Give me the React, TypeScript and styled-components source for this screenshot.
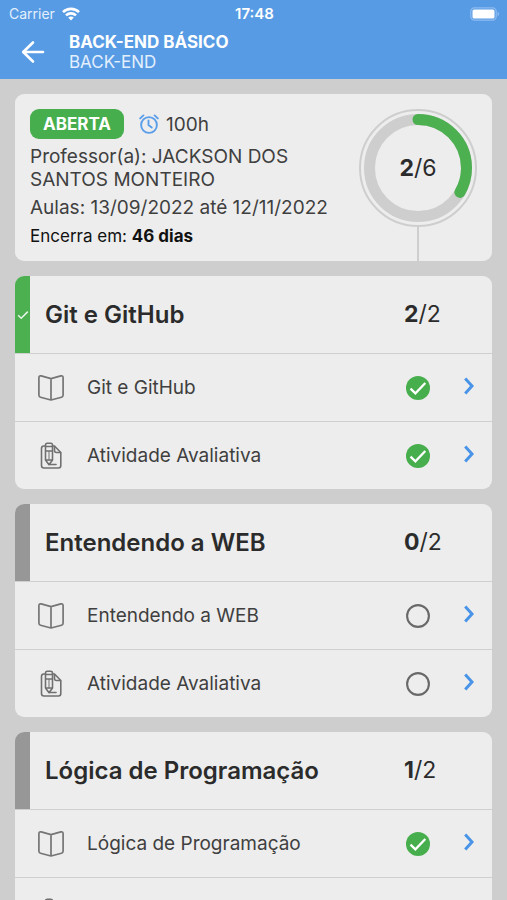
import React from "react";
import styled, { createGlobalStyle } from "styled-components";

const GlobalStyle = createGlobalStyle`
  *, *::before, *::after { box-sizing: border-box; }
  body {
    margin: 0;
    background: #cecece;
    color: #2b2b2b;
    font-family: Inter, "Liberation Sans", sans-serif;
  }
  h1, h2, p, ul { margin: 0; padding: 0; }
  ul { list-style: none; }
`;

const Screen = styled.div`
  height: 100vh;
  display: flex;
  flex-direction: column;
  overflow: hidden;
`;

const TopArea = styled.header`
  flex: none;
  background: #579be4;
  color: #fff;
`;

const StatusBar = styled.div`
  display: grid;
  grid-template-columns: 1fr auto 1fr;
  align-items: center;
  height: 28px;
  padding: 0 7px 0 9px;
  font-size: 14px;
  line-height: 16px;
`;

const Carrier = styled.span`
  display: flex;
  align-items: center;
  gap: 7px;
  color: #e3effc;
`;

const Clock = styled.span`
  font-size: 15px;
  font-weight: 600;
`;

const BatterySlot = styled.span`
  display: flex;
  justify-content: flex-end;
`;

const TitleBar = styled.div`
  display: flex;
  align-items: center;
  gap: 23px;
  height: 51px;
  padding: 0 20px 3px;
`;

const BackButton = styled.button`
  display: flex;
  padding: 0;
  border: 0;
  background: none;
  color: inherit;
  cursor: pointer;
`;

const CourseTitle = styled.h1`
  font-size: 17px;
  line-height: 20px;
  font-weight: 700;
`;

const CourseArea = styled.p`
  font-size: 17px;
  line-height: 20px;
  color: #e3effc;
`;

const Content = styled.main`
  flex: 1;
  min-height: 0;
  display: flex;
  flex-direction: column;
  gap: 15px;
  padding: 15px;
  overflow: hidden;
`;

const Card = styled.section`
  flex: none;
  overflow: hidden;
  border-radius: 9px;
  background: #ededed;
`;

const Summary = styled(Card)`
  display: flex;
  justify-content: space-between;
  padding: 0 15px;
`;

const SummaryText = styled.div`
  flex: 1;
  padding: 15px 0 13px;
  font-size: 19px;
  color: #3f3f3f;
`;

const StatusLine = styled.div`
  display: flex;
  align-items: center;
  gap: 15px;
  margin-bottom: 6px;
`;

const Badge = styled.span`
  padding: 0 13px;
  border-radius: 9px;
  background: #46ae4c;
  color: #fff;
  font-size: 17px;
  line-height: 30px;
  font-weight: 700;
`;

const Workload = styled.span`
  display: flex;
  align-items: center;
  gap: 7px;
`;

const Teacher = styled.p`
  max-width: 290px;
  line-height: 23px;
`;

const Period = styled.p`
  margin-top: 5px;
  line-height: 24px;
  white-space: nowrap;
`;

const Deadline = styled.p`
  margin-top: 4px;
  font-size: 17px;
  line-height: 24px;
  color: #111;
`;

const Gauge = styled.div`
  display: flex;
  flex-direction: column;
  align-items: center;
  padding-top: 15px;
`;

const Dial = styled.div`
  display: grid;
  place-items: center;
  > * { grid-area: 1 / 1; }
`;

const DialValue = styled.span`
  font-size: 23px;
  line-height: 28px;
`;

const Stem = styled.div`
  flex: 1;
  width: 2px;
  background: #cecece;
`;

const ModuleHeader = styled.div`
  display: flex;
  align-items: stretch;
  height: 77px;
`;

const Marker = styled.span<{ $done: boolean }>`
  flex: none;
  display: flex;
  align-items: center;
  justify-content: center;
  width: 15px;
  background: ${(p) => (p.$done ? "#4caf50" : "#979797")};
`;

const ModuleTitle = styled.h2`
  flex: 1;
  align-self: center;
  padding-left: 15px;
  font-size: 24px;
  line-height: 31px;
  font-weight: 600;
`;

const ModuleCount = styled.span`
  flex: none;
  align-self: center;
  width: 88px;
  font-size: 23px;
  line-height: 31px;
`;

const Lesson = styled.button`
  display: flex;
  align-items: center;
  width: 100%;
  height: 68px;
  padding: 0 17px 0 22px;
  border: 0;
  border-top: 1px solid #cfcfcf;
  background: none;
  color: #3f3f3f;
  font: inherit;
  font-size: 19px;
  line-height: 24px;
  text-align: left;
  cursor: pointer;
`;

const LessonName = styled.span`
  flex: 1;
  padding-left: 22px;
`;

const Chevron = styled.span`
  display: flex;
  padding: 0 0 3px 33px;
`;

const WifiIcon = () => (
  <svg width="18" height="14" viewBox="0 0 18 14" fill="none" stroke="#fff" strokeWidth="2.6" aria-hidden="true">
    <path d="M1 5.2C5.400 .7 12.600 .7 17 5.200" />
    <path d="M4 8.400c2.800-2.700 7.200-2.700 10 0" />
    <path d="M6.200 10.500 9 13.600l2.800-3.100c-1.600-1.500-4-1.500-5.600 0z" fill="#fff" stroke="none" />
  </svg>
);

const BatteryIcon = () => (
  <svg width="30" height="14" viewBox="0 0 30 14" aria-hidden="true">
    <rect x=".8" y=".8" width="25.400" height="12.400" rx="3.600" fill="none" stroke="#8fbcf0" strokeWidth="1.200" />
    <rect x="2.500" y="2.500" width="22" height="9" rx="1.600" fill="#fff" />
    <path d="M27.600 4.800c2 .7 2 3.700 0 4.400z" fill="#8fbcf0" />
  </svg>
);

const BackIcon = () => (
  <svg width="26" height="26" viewBox="0 0 26 26" fill="none" stroke="#fff" strokeWidth="2.600" strokeLinecap="round" strokeLinejoin="round" aria-hidden="true">
    <path d="M23 13H3.500M13 3.500 3.200 13l9.800 9.500" />
  </svg>
);

const AlarmIcon = () => (
  <svg width="20" height="20" viewBox="0 0 20 20" fill="none" stroke="#5a9eea" strokeWidth="1.900" strokeLinecap="round" strokeLinejoin="round" aria-hidden="true">
    <circle cx="10" cy="11" r="7.900" />
    <path d="M9.500 6.500V11l3.200 2.600M1.200 4.400 4.400 1.400M18.800 4.400l-3.200-3" />
  </svg>
);

const BookIcon = () => (
  <svg width="28" height="28" viewBox="0 0 28 28" fill="none" stroke="#757575" strokeWidth="1.700" strokeLinejoin="round" aria-hidden="true">
    <path d="M14 4.600 4.200 1.900C2.600 1.500 1.900 2.200 1.900 3.700v17.400c0 1.200.5 1.900 1.600 2.200L14 26l10.500-2.700c1.100-.3 1.600-1 1.600-2.200V3.700c0-1.500-.7-2.200-2.300-1.800zV26" />
  </svg>
);

const TaskIcon = () => (
  <svg width="28" height="28" viewBox="0 0 28 28" fill="none" stroke="#707070" strokeWidth="1.600" strokeLinejoin="round" strokeLinecap="round" aria-hidden="true">
    <path d="M8.500 4H6.800Q4.500 4 4.500 6.500v17Q4.500 26 7 26h14.500q2.300 0 2.300-2.500V10.500L17.500 4H15.500" />
    <path d="M17.500 4.500V8.500q0 2 2 2H23.500" />
    <path d="M8.500 18V3q0-1.700 1.700-1.700h3.600Q15.500 1.300 15.500 3v15L12 22.700zM8.500 4.500h7M8.500 9h7M8.500 18h7" />
    <path d="M12 9.500V18" strokeWidth="1" />
    <path d="M12.500 22.500h6.500" />
  </svg>
);

const MarkerCheckIcon = () => (
  <svg width="12" height="10" viewBox="0 0 12 10" fill="none" stroke="#e8f5e9" strokeWidth="1.500" aria-hidden="true">
    <path d="m1.200 5.200 3 3 6.600-6.600" />
  </svg>
);

const StateIcon = ({ done }: { done: boolean }) => (
  <svg width="24" height="24" viewBox="0 0 24 24" fill="none" role="img" aria-label={done ? "Concluída" : "Pendente"}>
    {done ? (
      <>
        <circle cx="12" cy="12" r="12" fill="#46ae4c" />
        <path d="m4.500 12.600 4.900 4.700L19.300 7" stroke="#fff" strokeWidth="2.300" />
      </>
    ) : (
      <circle cx="12" cy="12" r="10.900" stroke="#696969" strokeWidth="2.100" />
    )}
  </svg>
);

const ChevronIcon = () => (
  <svg width="12" height="18" viewBox="0 0 12 18" fill="none" stroke="#4a94e8" strokeWidth="3" aria-hidden="true">
    <path d="M2.200 1.400 9 9l-6.800 7.600" />
  </svg>
);

const RADIUS = 48.5;

const DialRing = ({ done, total }: { done: number; total: number }) => {
  const length = 2 * Math.PI * RADIUS;
  return (
    <svg width="118" height="118" viewBox="0 0 118 118" fill="none" aria-hidden="true">
      <circle cx="59" cy="59" r="58" stroke="#cecece" strokeWidth="2" />
      <circle cx="59" cy="59" r={RADIUS} stroke="#cecece" strokeWidth="11" />
      <circle
        cx="59"
        cy="59"
        r={RADIUS}
        stroke="#4caf50"
        strokeWidth="11"
        strokeLinecap="round"
        strokeDasharray={`${(length * done) / total} ${length}`}
        transform="rotate(-90 59 59)"
      />
    </svg>
  );
};

type Item = { kind: "book" | "task"; name: string; done: boolean };
type Module = { title: string; done: number; items: Item[] };

const modules: Module[] = [
  {
    title: "Git e GitHub",
    done: 2,
    items: [
      { kind: "book", name: "Git e GitHub", done: true },
      { kind: "task", name: "Atividade Avaliativa", done: true },
    ],
  },
  {
    title: "Entendendo a WEB",
    done: 0,
    items: [
      { kind: "book", name: "Entendendo a WEB", done: false },
      { kind: "task", name: "Atividade Avaliativa", done: false },
    ],
  },
  {
    title: "Lógica de Programação",
    done: 1,
    items: [
      { kind: "book", name: "Lógica de Programação", done: true },
      { kind: "task", name: "Atividade Avaliativa", done: false },
    ],
  },
];

const ModuleCard = ({ module }: { module: Module }) => {
  const complete = module.done === module.items.length;
  return (
    <Card>
      <ModuleHeader>
        <Marker $done={complete}>{complete && <MarkerCheckIcon />}</Marker>
        <ModuleTitle>{module.title}</ModuleTitle>
        <ModuleCount>
          <b>{module.done}</b>/{module.items.length}
        </ModuleCount>
      </ModuleHeader>
      <ul>
        {module.items.map((item) => (
          <li key={item.name}>
            <Lesson type="button">
              {item.kind === "book" ? <BookIcon /> : <TaskIcon />}
              <LessonName>{item.name}</LessonName>
              <StateIcon done={item.done} />
              <Chevron>
                <ChevronIcon />
              </Chevron>
            </Lesson>
          </li>
        ))}
      </ul>
    </Card>
  );
};

export default function App() {
  return (
    <Screen>
      <GlobalStyle />
      <TopArea>
        <StatusBar>
          <Carrier>
            Carrier <WifiIcon />
          </Carrier>
          <Clock>17:48</Clock>
          <BatterySlot>
            <BatteryIcon />
          </BatterySlot>
        </StatusBar>
        <TitleBar>
          <BackButton type="button" aria-label="Voltar">
            <BackIcon />
          </BackButton>
          <div>
            <CourseTitle>BACK-END BÁSICO</CourseTitle>
            <CourseArea>BACK-END</CourseArea>
          </div>
        </TitleBar>
      </TopArea>
      <Content>
        <Summary>
          <SummaryText>
            <StatusLine>
              <Badge>ABERTA</Badge>
              <Workload>
                <AlarmIcon />
                100h
              </Workload>
            </StatusLine>
            <Teacher>Professor(a): JACKSON DOS SANTOS MONTEIRO</Teacher>
            <Period>Aulas: 13/09/2022 até 12/11/2022</Period>
            <Deadline>
              Encerra em: <b>46 dias</b>
            </Deadline>
          </SummaryText>
          <Gauge>
            <Dial>
              <DialRing done={2} total={6} />
              <DialValue>
                <b>2</b>/6
              </DialValue>
            </Dial>
            <Stem />
          </Gauge>
        </Summary>
        {modules.map((module) => (
          <ModuleCard key={module.title} module={module} />
        ))}
      </Content>
    </Screen>
  );
}
